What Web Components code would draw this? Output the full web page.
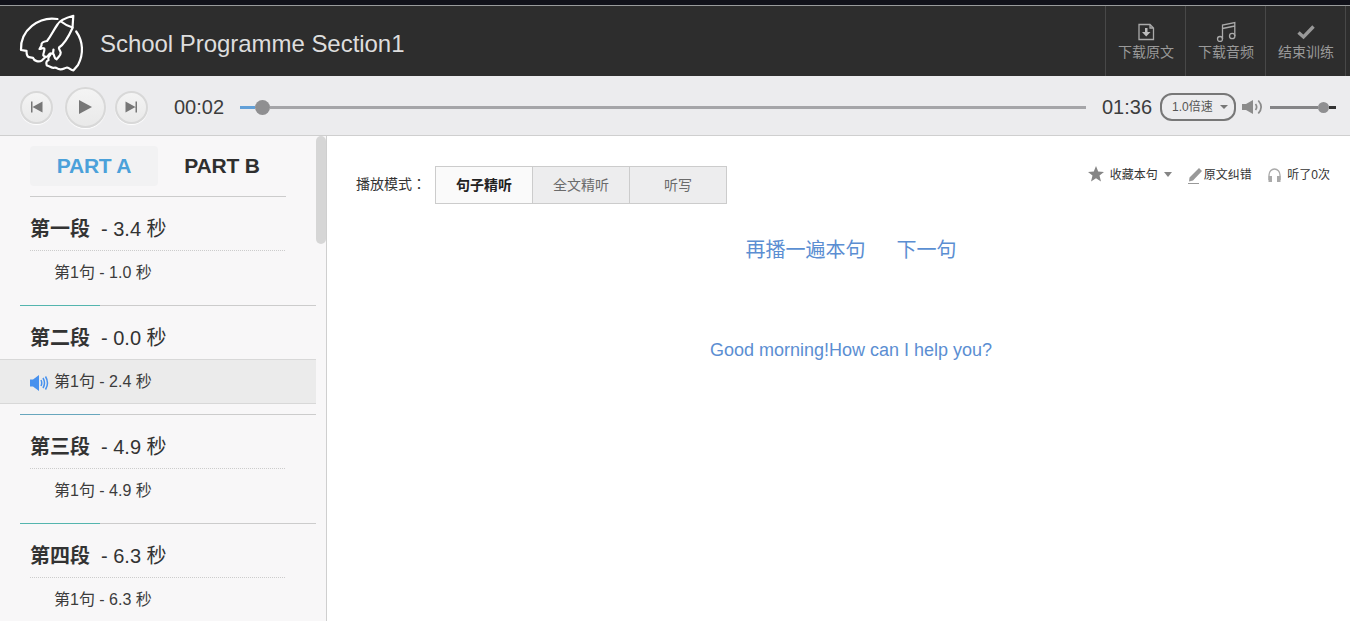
<!DOCTYPE html>
<html lang="zh-CN">
<head>
<meta charset="utf-8">
<title>School Programme Section1</title>
<style>
  html, body { margin: 0; height: 100%; overflow: hidden; background: #fff; }
  body { font-family: "Liberation Sans", "Noto Sans CJK SC", sans-serif; color: #333; }
</style>
</head>
<body>
<listening-app></listening-app>
<script>
const define = (name, html) => {
  const template = document.createElement('template');
  template.innerHTML = html;
  customElements.define(name, class extends HTMLElement {
    connectedCallback() {
      if (this.shadowRoot) return;
      this.attachShadow({ mode: 'open' }).append(template.content.cloneNode(true));
    }
  });
};

define('rocket-logo', `
<style>:host{display:block;width:84px;height:72px}svg{display:block}</style>
<svg width="84" height="72" viewBox="0 0 84 72" fill="none" stroke="#fff" stroke-width="2.200" stroke-linejoin="round" stroke-linecap="round">
  <path d="M47.500 11 C29 8 10 22 11 42 L16.500 42.800 C16.500 46 16.500 48.500 19 49.200 L23 49.800 C24 53 29 54.500 32 52.300 L35.500 49"/>
  <path d="M66.200 23.500 C73 33 74 46 68 57 L63.500 62.300 C61 62.500 60 60 57 59.500 C54 60 53 62 49.500 61.200 C47 61 47 59 44 59.800 C41 60 40 58 36.800 57.500 C36 55 36 53 38.500 52.300 C38 50 38.500 48.500 40.500 46.500"/>
  <path d="M63.300 7.800 C55 10 50 12 47.500 16.500 C43 23 41 28 37 33 C33 33.500 31 35 31.500 37.500 L29.500 41 C32 41 32 39.500 34.300 40.500 C35 43 33 45 33.300 47.500 C36 50 37.500 48.500 38.500 47 C40.500 44 41.500 46 43 45.500 C45 47.500 43.500 50 46.500 51.300 C48 49 51 48 50.700 44.500 C50 42 48.500 41 49 39.500 C53 37 58 30 62.500 20 Z"/>
  <path d="M51 13.500 Q56 17.500 62.500 19.500 M43 45.500 L43.500 41.500"/>
</svg>`);

define('header-action', `
<style>
  :host{display:flex;flex-direction:column;align-items:center;box-sizing:border-box;width:80px;height:70px;padding-top:14px;border-left:1px solid #484848;color:#999}
  .icon{height:22px;display:flex}
  .label{font-size:14px;line-height:20px;white-space:nowrap;padding-left:1px}
</style>
<div class="icon"><slot name="icon"></slot></div><div class="label"><slot></slot></div>`);

define('app-header', `
<style>
  :host{display:flex;box-sizing:border-box;height:76px;border-top:5px solid #11121a;background:#2d2d2d}
  .bar{display:flex;flex:1;border-top:1px solid #999b9c}
  rocket-logo{margin:2px 0 0 10px;height:68px;overflow:hidden}
  h1{flex:1;margin:0 0 0 6px;font-size:24px;line-height:76px;font-weight:400;letter-spacing:-.04px;color:#ddd}
  nav{display:flex;border-right:1px solid #484848;margin-right:4px}
  svg{fill:none;stroke:#aaa;stroke-width:1.300;display:block}
</style>
<div class="bar">
  <rocket-logo></rocket-logo>
  <h1>School Programme Section1</h1>
  <nav>
    <header-action><svg slot="icon" width="20" height="22" viewBox="0 0 20 22"><path d="M3 4.500H14L17.500 8V19.500H3Z M14 4.500V8H17.500"/><path d="M9 8h2.500v4H14.500L10.200 16.500 6 12H9Z" fill="#bbb" stroke="none"/></svg>下载原文</header-action>
    <header-action><svg slot="icon" width="22" height="22" viewBox="0 0 22 22"><path d="M7.500 19V5L19.800 2.600V16M7.500 8.500L19.800 6"/><circle cx="5" cy="19" r="2.500"/><circle cx="17.200" cy="16" r="2.700"/></svg>下载音频</header-action>
    <header-action><svg slot="icon" width="20" height="22" viewBox="0 0 20 22"><path d="M2.500 12.500L7.500 17 17.500 6.500" style="stroke-width:3.400;stroke:#999"/></svg>结束训练</header-action>
  </nav>
</div>`);

define('round-button', `
<style>
  :host{display:flex;align-items:center;justify-content:center;box-sizing:border-box;width:33px;height:33px;border:2px solid #d8d8d8;border-radius:50%;background:linear-gradient(#f4f4f4,#e9e9e9);box-shadow:0 1px 1px #fff}
  :host([large]){width:41px;height:41px}
</style><slot></slot>`);

define('range-bar', `
<style>
  :host{display:flex;align-items:center;height:16px}
  i{display:block;height:3px}
  .done{width:var(--done);background:var(--before)}
  .knob{width:var(--size);height:var(--size);border-radius:50%;background:#8f8f91}
  .rest{flex:1;background:var(--after)}
</style><i class="done"></i><i class="knob"></i><i class="rest"></i>`);

define('player-bar', `
<style>
  :host{display:flex;align-items:center;box-sizing:border-box;height:60px;padding:3px 14px 0 20px;background:#ececee;border-bottom:1px solid #cfcfcf}
  .buttons{display:flex;align-items:center}
  .buttons [large]{margin:0 9px 0 12px}
  svg{display:block;fill:#777}
  time{font-size:20px;line-height:24px;color:#3d3d3d}
  .now{margin:0 16px 0 26px;width:50px}
  .track{flex:1;--done:15px;--size:15px;--before:#62a0d8;--after:#a5a5a8}
  .total{margin-left:16px;width:50px}
  .speed{display:flex;align-items:center;justify-content:space-between;box-sizing:border-box;width:76px;height:28px;margin:0 6px 0 8px;padding:0 6px 0 10px;border:2px solid #777;border-radius:12px;font-size:12px;line-height:24px;color:#555}
  .volume{width:66px;margin-left:7px;--done:48px;--size:11px;--before:#858587;--after:#333}
</style>
<div class="buttons">
  <round-button><svg width="13" height="12" viewBox="0 0 13 12"><path d="M1 .5h1.500v11H1ZM12.500.5v11L2.500 6Z"/></svg></round-button>
  <round-button large><svg width="13" height="14" viewBox="0 0 13 14"><path d="M0 0 13 7 0 14Z"/></svg></round-button>
  <round-button><svg width="13" height="12" viewBox="0 0 13 12"><path d="M10.500.5H12v11h-1.500ZM.5.5v11L10.500 6Z"/></svg></round-button>
</div>
<time class="now">00:02</time>
<range-bar class="track"></range-bar>
<time class="total">01:36</time>
<div class="speed">1.0倍速<svg width="8" height="4" viewBox="0 0 8 4"><path d="M0 0h8L4 4Z"/></svg></div>
<svg width="21" height="18" viewBox="0 0 21 18"><path d="M0 6h4L11 2v14L4 12H0Z" fill="#8b8b8b"/><path d="M13.500 6Q15.800 9 13.500 12M16.300 2.500Q22 9 16.300 15.500" fill="none" stroke="#8b8b8b" stroke-width="1.700"/></svg>
<range-bar class="volume"></range-bar>`);

define('part-tab', `
<style>
  :host{display:block;width:128px;height:40px;border-radius:4px;font-weight:700;font-size:21px;letter-spacing:-.2px;line-height:40px;text-align:center;color:#2f2f2f;white-space:nowrap}
  :host([active]){background:#f2f2f3;color:#4ba1da}
</style><slot></slot>`);

define('script-section', `
<style>
  :host{display:block;height:109px;width:316px}
  .rule{display:block;height:1px;margin-left:20px;background:linear-gradient(90deg,var(--accent,#ccc) 80px,#ccc 80px)}
  :host([first]) .rule{margin-right:30px;margin-left:30px}
  h2{display:flex;gap:11px;margin:0 30px;padding-top:21px;height:53px;font-size:20px;line-height:22px;font-weight:400;white-space:nowrap;box-sizing:border-box}
  b{font-weight:700}
  .row{display:flex;align-items:center;box-sizing:border-box;height:45px;padding-bottom:5px;font-size:16px;color:#3c3c3c}
  .icon{width:54px;display:flex;box-sizing:border-box;padding:5px 0 0 29px}
  .icon svg{display:none}
  .line{height:1px;margin:0 30px;background:repeating-linear-gradient(90deg,#ccc 0 1px,transparent 1px 2px)}
  :host([playing]) .line{margin:0;background:#d8d8d8}
  :host([playing]) .row{height:44px;padding-bottom:3px;background:#ebebeb;border-bottom:1px solid #d8d8d8}
  :host([playing]) svg{display:block}
</style>
<span class="rule"></span>
<h2><b><slot name="title"></slot></b><span><slot name="time"></slot></span></h2>
<div class="line"></div>
<div class="row"><span class="icon"><svg width="20" height="16" viewBox="0 0 20 16"><path d="M1 4.500h3L10 0v16l-6-4.500H1Z" fill="#4791ee"/><path d="M12 5Q13.500 8 12 11M14 3Q17 8 14 13M16.500 1.500Q20.500 8 16.500 14.500" fill="none" stroke="#4791ee" stroke-width="1.500"/></svg></span><slot></slot></div>`);

define('script-sidebar', `
<style>
  :host{display:grid;grid-template-columns:316px 10px;box-sizing:border-box;width:327px;border-right:1px solid #cfcfcf;background:#f8f7f8;overflow:hidden}
  .list{overflow:hidden;min-height:0}
  .tabs{display:flex;padding:10px 0 10px 30px}
  .thumb{height:108px;border-radius:5px;background:#d6d6d6}
</style>
<div class="list">
  <div class="tabs"><part-tab active>PART A</part-tab><part-tab>PART B</part-tab></div>
  <script-section first><span slot="title">第一段</span><span slot="time">- 3.4 秒</span>第1句 - 1.0 秒</script-section>
  <script-section playing style="--accent:#54b5ae"><span slot="title">第二段</span><span slot="time">- 0.0 秒</span>第1句 - 2.4 秒</script-section>
  <script-section style="--accent:#68a6bd"><span slot="title">第三段</span><span slot="time">- 4.9 秒</span>第1句 - 4.9 秒</script-section>
  <script-section style="--accent:#54b5ae"><span slot="title">第四段</span><span slot="time">- 6.3 秒</span>第1句 - 6.3 秒</script-section>
</div>
<div class="thumb"></div>`);

define('mode-tabs', `
<style>
  :host{display:flex;align-items:flex-start;font-size:14px}
  .label{width:79px;height:38px;line-height:36px}
  .label i{font-style:normal;font-family:"Noto Sans CJK TC",sans-serif;line-height:20px}
  .group{display:grid;grid-template-columns:96px 97px 97px;border:1px solid #ccc;height:36px;line-height:36px;text-align:center;color:#6b6b6b;background:#ededee}
  .group span+span{border-left:1px solid #ccc}
  .on{background:#fafafa;font-weight:700;color:#222}
</style>
<span class="label">播放模式<i lang="zh-TW">：</i></span>
<div class="group"><span class="on">句子精听</span><span>全文精听</span><span>听写</span></div>`);

define('sentence-tools', `
<style>
  :host{display:flex;align-items:center;height:16px;font-size:12px;line-height:16px;white-space:nowrap;color:#333}
  svg{display:block;fill:#858585}
  span{padding-top:2px}
  .caret{margin:1px 17px 0 6px}
</style>
<svg width="16" height="16" viewBox="0 0 16 16" style="margin-right:6px"><path d="M8 0 10.200 5.500 16 6 11.500 9.600 13 15.500 8 12.300 3 15.500 4.500 9.600 0 6 5.800 5.500Z"/></svg>
<span>收藏本句</span>
<svg class="caret" width="8" height="5" viewBox="0 0 8 5"><path d="M0 0h8L4 5Z"/></svg>
<svg width="14" height="16" viewBox="0 0 14 16" style="margin:3px 2px 0 -1px"><path d="M11 0 14 3 5 12.500 1 13.500 1.500 9.500ZM0 15h11v1H0Z" fill="#999"/></svg>
<span style="margin-right:1px">原文纠错</span>
<svg width="13" height="14" viewBox="0 0 13 14" style="margin:1px 6px 0 15px"><path d="M1 12V7a5.500 6 0 0 1 11 0v5" fill="none" stroke="#aaa" stroke-width="1.300"/><path d="M.5 8H4v6H.5ZM9 8h3.500v6H9Z" fill="#aaa"/></svg>
<span style="margin-left:.5px">听了0次</span>`);

define('sentence-panel', `
<style>
  :host{display:block;flex:1;min-width:0}
  .top{display:flex;justify-content:space-between;height:38px;padding:30px 20px 0 29px}
  .links{display:flex;justify-content:center;gap:31px;margin-top:31px;padding-left:25px;font-size:20px;line-height:30px;color:#5b8ed2}
  p{margin:70px 0 0;padding-left:25px;text-align:center;font-size:18px;line-height:30px;color:#5b8ed2}
</style>
<div class="top"><mode-tabs></mode-tabs><sentence-tools></sentence-tools></div>
<div class="links"><span>再播一遍本句</span><span>下一句</span></div>
<p>Good morning!How can I help you?</p>`);

define('listening-app', `
<style>
  :host{display:flex;flex-direction:column;width:1350px;height:621px;overflow:hidden}
  main{display:flex;flex:1;min-height:0}
</style>
<app-header></app-header>
<player-bar></player-bar>
<main><script-sidebar></script-sidebar><sentence-panel></sentence-panel></main>`);
</script>
</body>
</html>
